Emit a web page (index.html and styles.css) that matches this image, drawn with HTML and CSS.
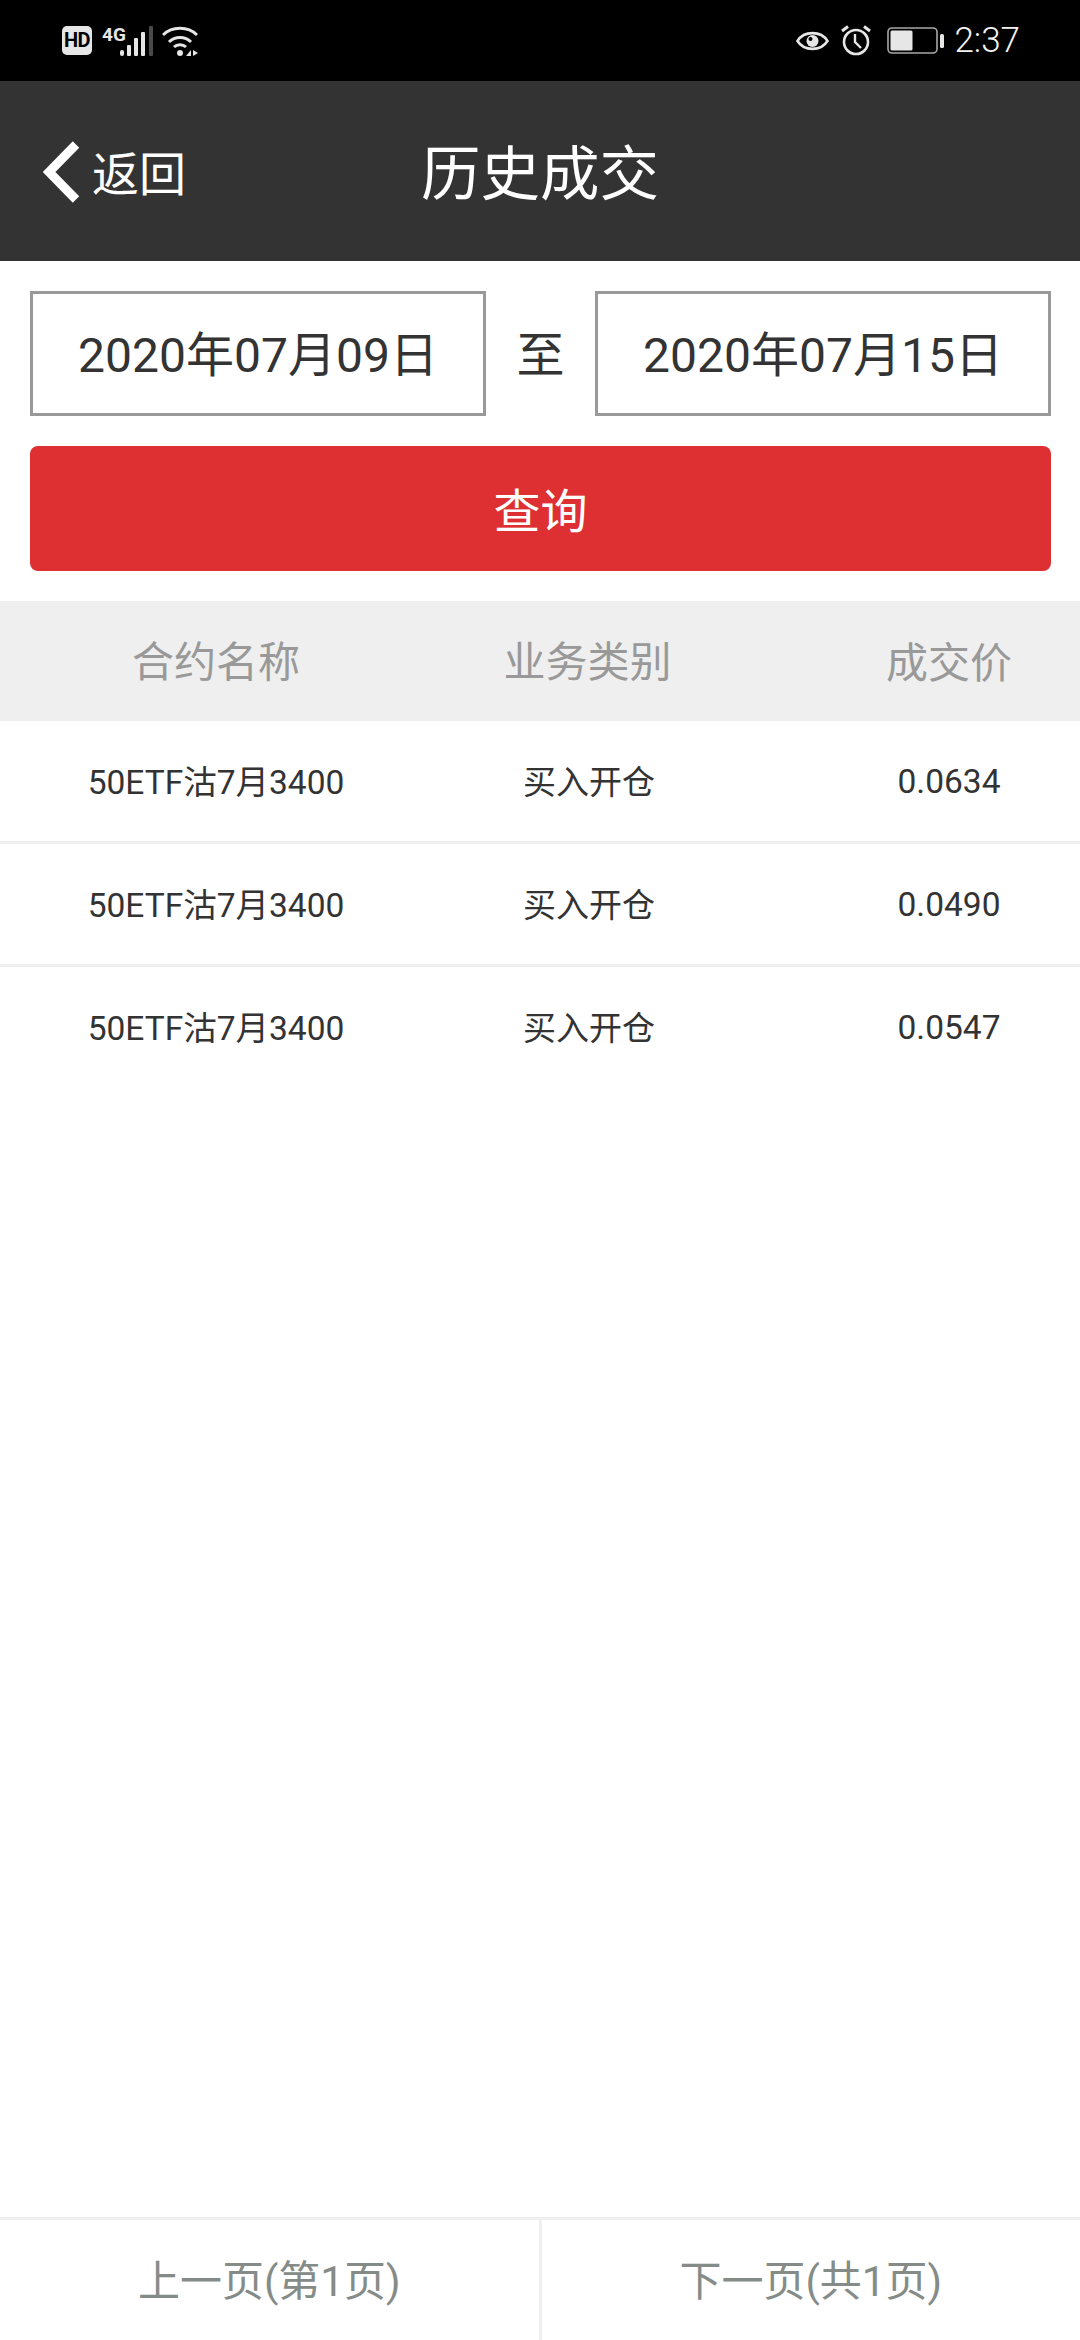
FILE: index.html
```html
<!DOCTYPE html>
<html>
<head>
  <meta charset="UTF-8">
  <title>历史成交</title>
  <link rel="stylesheet" href="styles.css">
</head>
<body>
  <div class="container">
    <div class="status-bar">
      <div class="status-left">
        <div class="hd-badge">HD</div>
        <div class="net-label">4G</div>
        <svg class="signal-icon" width="33" height="30" viewBox="0 0 33 30">
          <rect x="0" y="24" width="4" height="6" rx="2" fill="#e6e6e6"/>
          <rect x="7" y="19" width="4" height="11" rx="1" fill="#e6e6e6"/>
          <rect x="14" y="12" width="4" height="18" rx="1" fill="#e6e6e6"/>
          <rect x="21" y="6" width="4" height="24" rx="1" fill="#e6e6e6"/>
          <rect x="29" y="0" width="4" height="30" rx="1" fill="#4a4a4a"/>
        </svg>
        <svg class="wifi-icon" width="36" height="30" viewBox="0 0 36 30">
          <path d="M1 9 C10 0 26 0 35 9" fill="none" stroke="#e6e6e6" stroke-width="3"/>
          <path d="M7 16 C13 10 23 10 29 16" fill="none" stroke="#e6e6e6" stroke-width="3"/>
          <path d="M12 21 C15 18 21 18 24 21" fill="none" stroke="#e6e6e6" stroke-width="3"/>
          <circle cx="18" cy="27" r="3" fill="#e6e6e6"/>
          <path d="M29 24 V30 H24 Z" fill="#e6e6e6"/>
          <path d="M31 24 V30 L36 27 Z" fill="#e6e6e6"/>
        </svg>
      </div>
      <div class="status-right">
        <svg class="eye-icon" width="33" height="24" viewBox="0 0 33 24">
          <path d="M1.5 12 C8 1.5 25 1.5 31.5 12 C25 22.5 8 22.5 1.5 12 Z" fill="none" stroke="#e6e6e6" stroke-width="2.6"/>
          <circle cx="16.5" cy="12" r="6" fill="#e6e6e6"/>
          <circle cx="14.5" cy="10" r="2" fill="#000"/>
        </svg>
        <svg class="alarm-icon" width="30" height="31" viewBox="0 0 30 31">
          <circle cx="15" cy="17" r="12" fill="none" stroke="#e6e6e6" stroke-width="2.6"/>
          <path d="M14 9 V17 L20 23" fill="none" stroke="#e6e6e6" stroke-width="2.4"/>
          <path d="M1 6 L7 1.5 M29 6 L23 1.5" fill="none" stroke="#e6e6e6" stroke-width="3"/>
        </svg>
        <svg class="battery-icon" width="57" height="27" viewBox="0 0 57 27">
          <rect x="1" y="1" width="49" height="25" rx="4" fill="none" stroke="#a8a8a8" stroke-width="1.6"/>
          <rect x="3.5" y="3.5" width="22" height="20" rx="1.5" fill="#e6e6e6"/>
          <rect x="53" y="7" width="4" height="14" rx="1.5" fill="#e6e6e6"/>
        </svg>
        <div class="status-time">2:37</div>
      </div>
    </div>

    <div class="header">
      <div class="back-link">
        <svg class="back-icon" width="37" height="62" viewBox="0 0 37 62">
          <path d="M33 3.5 L6 31 L33 58.5" fill="none" stroke="#ffffff" stroke-width="9"/>
        </svg>
        <span class="back-text">返回</span>
      </div>
      <h1>历史成交</h1>
    </div>

    <div class="query-section">
      <div class="date-row">
        <div class="date-box">2020年07月09日</div>
        <div class="date-sep">至</div>
        <div class="date-box">2020年07月15日</div>
      </div>
      <div class="query-btn">查询</div>
    </div>

    <div class="table-row table-head">
      <div class="col-name">合约名称</div>
      <div class="col-type">业务类别</div>
      <div class="col-price">成交价</div>
    </div>
    <div class="table-row">
      <div class="col-name">50ETF沽7月3400</div>
      <div class="col-type">买入开仓</div>
      <div class="col-price">0.0634</div>
    </div>
    <div class="table-row">
      <div class="col-name">50ETF沽7月3400</div>
      <div class="col-type">买入开仓</div>
      <div class="col-price">0.0490</div>
    </div>
    <div class="table-row no-line">
      <div class="col-name">50ETF沽7月3400</div>
      <div class="col-type">买入开仓</div>
      <div class="col-price">0.0547</div>
    </div>

    <div class="pager">
      <div class="pager-btn">上一页(第1页)</div>
      <div class="pager-btn">下一页(共1页)</div>
    </div>
  </div>
</body>
</html>
```

FILE: styles.css
```css
body {
  font-family: Roboto, "Noto Sans CJK SC", sans-serif;
  background: #ffffff;
  margin: 0;
  padding: 0;
  width: 1080px;
  height: 2340px;
  color: #333333;
  overflow: hidden;
}

.container {
  height: 100%;
  display: flex;
  flex-direction: column;
}

/* Status bar */
.status-bar {
  height: 81px;
  background: #000000;
  display: flex;
  justify-content: space-between;
  align-items: center;
  padding: 0 60px 0 62px;
  color: #e6e6e6;
}

.status-left, .status-right {
  display: flex;
  align-items: center;
}

.hd-badge {
  width: 30px;
  height: 29px;
  background: #e6e6e6;
  border-radius: 5px;
  color: #000000;
  font-size: 20px;
  font-weight: 700;
  line-height: 29px;
  text-align: center;
  letter-spacing: -0.5px;
}

.net-label {
  width: 18px;
  margin-left: 10px;
  margin-bottom: 12px;
  font-family: "Liberation Sans Narrow", Roboto, sans-serif;
  font-size: 19px;
  font-weight: 700;
  line-height: 18px;
}

.wifi-icon {
  margin-left: 9px;
}

.alarm-icon {
  margin-left: 12px;
}

.battery-icon {
  margin-left: 16px;
}

.status-time {
  margin-left: 10px;
  font-size: 35px;
  font-weight: 300;
  color: #f2f2f2;
}

/* Title bar */
.header {
  height: 180px;
  background: #333333;
  position: relative;
  display: flex;
  justify-content: center;
  align-items: center;
  color: #ffffff;
}

h1 {
  margin: 0;
  padding-bottom: 5px;
  font-size: 59.5px;
  font-weight: 400;
}

.back-link {
  position: absolute;
  left: 43px;
  top: 55px;
  display: flex;
  align-items: center;
  gap: 12px;
}

.back-text {
  padding-bottom: 3px;
  font-size: 47px;
}

/* Query form */
.query-section {
  padding: 30px 29px 30px 30px;
  display: flex;
  flex-direction: column;
  gap: 30px;
}

.date-row {
  display: flex;
  align-items: center;
  justify-content: space-between;
}

.date-box {
  width: 456px;
  height: 125px;
  box-sizing: border-box;
  border: 3px solid #999999;
  padding-bottom: 6px;
  display: flex;
  align-items: center;
  justify-content: center;
  font-size: 48px;
}

.date-sep {
  padding-bottom: 6px;
  font-size: 48px;
}

.query-btn {
  height: 125px;
  box-sizing: border-box;
  padding-bottom: 3px;
  background: #de3032;
  border-radius: 8px;
  color: #ffffff;
  font-size: 47px;
  display: flex;
  align-items: center;
  justify-content: center;
}

/* Table */
.table-row {
  display: grid;
  grid-template-columns: 432px 314px 1fr;
  height: 120px;
  align-items: center;
  text-align: center;
  font-size: 33.5px;
  border-bottom: 3px solid #efefef;
}

.table-row.no-line {
  border-bottom: none;
}

.table-head {
  background: #efefef;
  border-bottom: none;
  color: #999999;
  font-size: 42px;
  padding-bottom: 3px;
  box-sizing: border-box;
}

.table-row .col-name, .table-row .col-type {
  padding-bottom: 3px;
}

.table-row .col-type {
  font-size: 33px;
}

.table-head .col-type {
  font-size: 42px;
  padding-right: 3px;
}

.col-price {
  padding-left: 72px;
}

/* Pager */
.pager {
  margin-top: auto;
  height: 120px;
  border-top: 3px solid #efefef;
  display: flex;
}

.pager-btn {
  flex: 1;
  box-sizing: border-box;
  padding-bottom: 6px;
  display: flex;
  align-items: center;
  justify-content: center;
  color: #858c88;
  font-size: 42px;
}

.pager-btn + .pager-btn {
  border-left: 3px solid #efefef;
}
```
